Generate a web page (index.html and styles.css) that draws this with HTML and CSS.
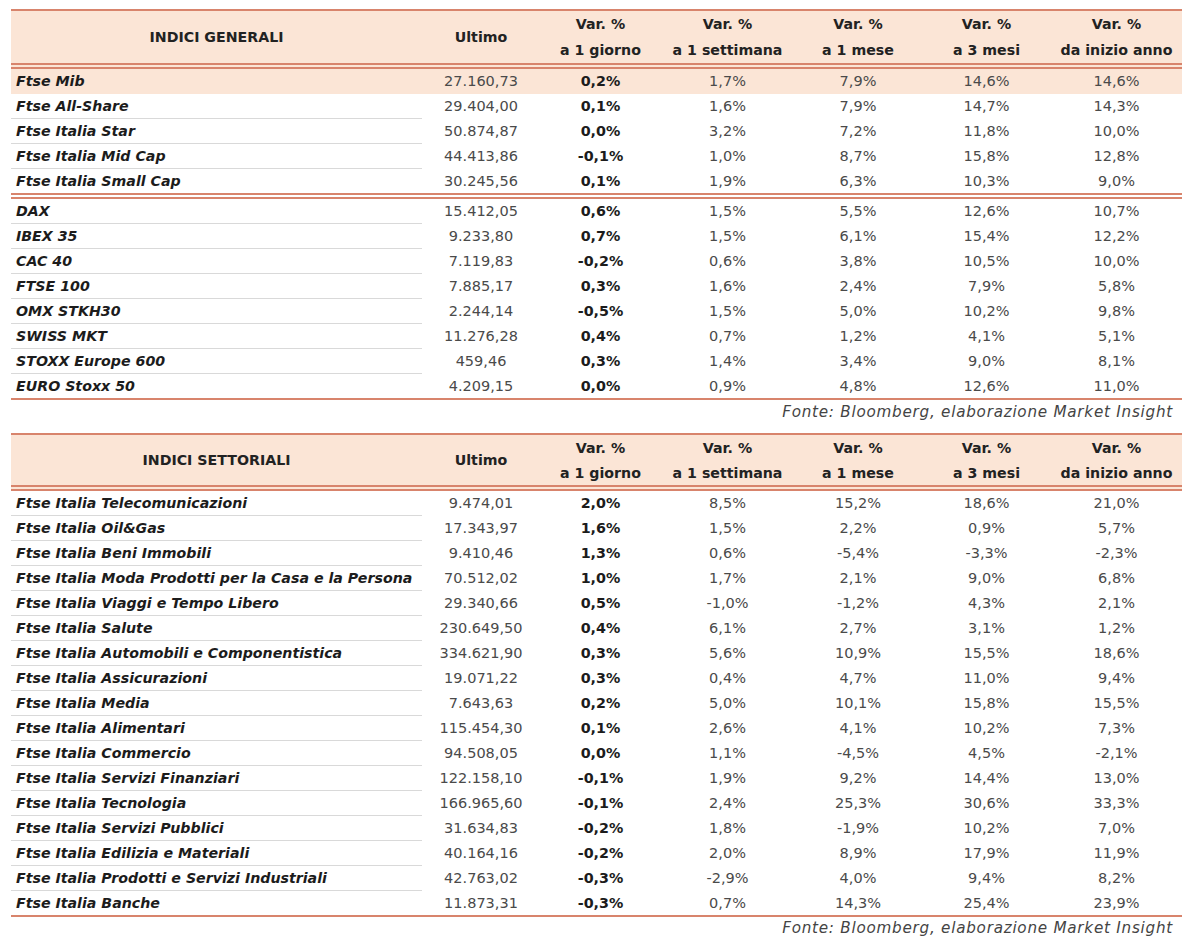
FILE: index.html
```html
<!DOCTYPE html>
<html lang="it">
<head>
<meta charset="utf-8">
<title>Indici</title>
<link rel="stylesheet" href="styles.css">
</head>
<body>
<div class="page">
  <table class="tbl">
    <colgroup>
      <col class="c-name"><col class="c-last"><col class="c-d1"><col class="c-w1"><col class="c-m1"><col class="c-m3"><col class="c-ytd">
    </colgroup>
    <thead>
      <tr>
        <th class="name-h">INDICI GENERALI</th>
        <th>Ultimo</th>
        <th>Var. %<br>a 1 giorno</th>
        <th>Var. %<br>a 1 settimana</th>
        <th>Var. %<br>a 1 mese</th>
        <th>Var. %<br>a 3 mesi</th>
        <th>Var. %<br>da inizio anno</th>
      </tr>
    </thead>
    <tbody>
      <tr class="hl"><td>Ftse Mib</td><td>27.160,73</td><td>0,2%</td><td>1,7%</td><td>7,9%</td><td>14,6%</td><td>14,6%</td></tr>
      <tr><td>Ftse All-Share</td><td>29.404,00</td><td>0,1%</td><td>1,6%</td><td>7,9%</td><td>14,7%</td><td>14,3%</td></tr>
      <tr><td>Ftse Italia Star</td><td>50.874,87</td><td>0,0%</td><td>3,2%</td><td>7,2%</td><td>11,8%</td><td>10,0%</td></tr>
      <tr><td>Ftse Italia Mid Cap</td><td>44.413,86</td><td>-0,1%</td><td>1,0%</td><td>8,7%</td><td>15,8%</td><td>12,8%</td></tr>
      <tr class="grp-end"><td>Ftse Italia Small Cap</td><td>30.245,56</td><td>0,1%</td><td>1,9%</td><td>6,3%</td><td>10,3%</td><td>9,0%</td></tr>
      <tr><td>DAX</td><td>15.412,05</td><td>0,6%</td><td>1,5%</td><td>5,5%</td><td>12,6%</td><td>10,7%</td></tr>
      <tr><td>IBEX 35</td><td>9.233,80</td><td>0,7%</td><td>1,5%</td><td>6,1%</td><td>15,4%</td><td>12,2%</td></tr>
      <tr><td>CAC 40</td><td>7.119,83</td><td>-0,2%</td><td>0,6%</td><td>3,8%</td><td>10,5%</td><td>10,0%</td></tr>
      <tr><td>FTSE 100</td><td>7.885,17</td><td>0,3%</td><td>1,6%</td><td>2,4%</td><td>7,9%</td><td>5,8%</td></tr>
      <tr><td>OMX STKH30</td><td>2.244,14</td><td>-0,5%</td><td>1,5%</td><td>5,0%</td><td>10,2%</td><td>9,8%</td></tr>
      <tr><td>SWISS MKT</td><td>11.276,28</td><td>0,4%</td><td>0,7%</td><td>1,2%</td><td>4,1%</td><td>5,1%</td></tr>
      <tr><td>STOXX Europe 600</td><td>459,46</td><td>0,3%</td><td>1,4%</td><td>3,4%</td><td>9,0%</td><td>8,1%</td></tr>
      <tr class="last"><td>EURO Stoxx 50</td><td>4.209,15</td><td>0,0%</td><td>0,9%</td><td>4,8%</td><td>12,6%</td><td>11,0%</td></tr>
    </tbody>
  </table>
  <p class="source">Fonte: Bloomberg, elaborazione Market Insight</p>

  <table class="tbl tbl-2">
    <colgroup>
      <col class="c-name"><col class="c-last"><col class="c-d1"><col class="c-w1"><col class="c-m1"><col class="c-m3"><col class="c-ytd">
    </colgroup>
    <thead>
      <tr>
        <th class="name-h">INDICI SETTORIALI</th>
        <th>Ultimo</th>
        <th>Var. %<br>a 1 giorno</th>
        <th>Var. %<br>a 1 settimana</th>
        <th>Var. %<br>a 1 mese</th>
        <th>Var. %<br>a 3 mesi</th>
        <th>Var. %<br>da inizio anno</th>
      </tr>
    </thead>
    <tbody>
      <tr><td>Ftse Italia Telecomunicazioni</td><td>9.474,01</td><td>2,0%</td><td>8,5%</td><td>15,2%</td><td>18,6%</td><td>21,0%</td></tr>
      <tr><td>Ftse Italia Oil&amp;Gas</td><td>17.343,97</td><td>1,6%</td><td>1,5%</td><td>2,2%</td><td>0,9%</td><td>5,7%</td></tr>
      <tr><td>Ftse Italia Beni Immobili</td><td>9.410,46</td><td>1,3%</td><td>0,6%</td><td>-5,4%</td><td>-3,3%</td><td>-2,3%</td></tr>
      <tr><td>Ftse Italia Moda Prodotti per la Casa e la Persona</td><td>70.512,02</td><td>1,0%</td><td>1,7%</td><td>2,1%</td><td>9,0%</td><td>6,8%</td></tr>
      <tr><td>Ftse Italia Viaggi e Tempo Libero</td><td>29.340,66</td><td>0,5%</td><td>-1,0%</td><td>-1,2%</td><td>4,3%</td><td>2,1%</td></tr>
      <tr><td>Ftse Italia Salute</td><td>230.649,50</td><td>0,4%</td><td>6,1%</td><td>2,7%</td><td>3,1%</td><td>1,2%</td></tr>
      <tr><td>Ftse Italia Automobili e Componentistica</td><td>334.621,90</td><td>0,3%</td><td>5,6%</td><td>10,9%</td><td>15,5%</td><td>18,6%</td></tr>
      <tr><td>Ftse Italia Assicurazioni</td><td>19.071,22</td><td>0,3%</td><td>0,4%</td><td>4,7%</td><td>11,0%</td><td>9,4%</td></tr>
      <tr><td>Ftse Italia Media</td><td>7.643,63</td><td>0,2%</td><td>5,0%</td><td>10,1%</td><td>15,8%</td><td>15,5%</td></tr>
      <tr><td>Ftse Italia Alimentari</td><td>115.454,30</td><td>0,1%</td><td>2,6%</td><td>4,1%</td><td>10,2%</td><td>7,3%</td></tr>
      <tr><td>Ftse Italia Commercio</td><td>94.508,05</td><td>0,0%</td><td>1,1%</td><td>-4,5%</td><td>4,5%</td><td>-2,1%</td></tr>
      <tr><td>Ftse Italia Servizi Finanziari</td><td>122.158,10</td><td>-0,1%</td><td>1,9%</td><td>9,2%</td><td>14,4%</td><td>13,0%</td></tr>
      <tr><td>Ftse Italia Tecnologia</td><td>166.965,60</td><td>-0,1%</td><td>2,4%</td><td>25,3%</td><td>30,6%</td><td>33,3%</td></tr>
      <tr><td>Ftse Italia Servizi Pubblici</td><td>31.634,83</td><td>-0,2%</td><td>1,8%</td><td>-1,9%</td><td>10,2%</td><td>7,0%</td></tr>
      <tr><td>Ftse Italia Edilizia e Materiali</td><td>40.164,16</td><td>-0,2%</td><td>2,0%</td><td>8,9%</td><td>17,9%</td><td>11,9%</td></tr>
      <tr><td>Ftse Italia Prodotti e Servizi Industriali</td><td>42.763,02</td><td>-0,3%</td><td>-2,9%</td><td>4,0%</td><td>9,4%</td><td>8,2%</td></tr>
      <tr class="last"><td>Ftse Italia Banche</td><td>11.873,31</td><td>-0,3%</td><td>0,7%</td><td>14,3%</td><td>25,4%</td><td>23,9%</td></tr>
    </tbody>
  </table>
  <p class="source source-end">Fonte: Bloomberg, elaborazione Market Insight</p>
</div>
</body>
</html>
```
FILE: styles.css
```css
html, body {
  margin: 0;
  padding: 0;
  background: #ffffff;
}

.page {
  padding: 9px 10px 0 11px;
  font-family: "DejaVu Sans", "Liberation Sans", sans-serif;
  color: #2b2b2b;
}

.tbl {
  width: 1171px;
  border-collapse: separate;
  border-spacing: 0;
  table-layout: fixed;
  font-size: 14.5px;
}

.c-name { width: 411px; }
.c-last { width: 118px; }
.c-d1 { width: 121px; }
.c-w1 { width: 133px; }
.c-m1 { width: 128px; }
.c-m3 { width: 129px; }
.c-ytd { width: 131px; }

.tbl thead th {
  background: #fbe5d6;
  border-top: 2px solid #d8846c;
  border-bottom: 6px double #d8846c;
  padding: 1px 0 0 0;
  line-height: 25.5px;
  font-size: 14.2px;
  font-weight: 700;
  color: #222222;
  text-align: center;
  vertical-align: middle;
  white-space: nowrap;
}

.tbl-2 thead th {
  line-height: 24.5px;
}

.tbl tbody td {
  padding: 0;
  line-height: 24px;
  border-bottom: 1px solid transparent;
  text-align: center;
  white-space: nowrap;
  color: #4a4a4a;
  font-weight: 400;
}

.tbl tbody td:first-child {
  text-align: left;
  padding-left: 5px;
  font-size: 14.2px;
  font-weight: 700;
  font-style: italic;
  color: #1c1c1c;
  border-bottom-color: #d9d9d9;
}

.tbl tbody td:nth-child(3) {
  font-size: 14.3px;
  font-weight: 700;
  color: #1c1c1c;
}

.tbl tbody tr.hl td {
  background: #fbe5d6;
  border-bottom-color: #fbe5d6;
}

.tbl tbody tr.grp-end td {
  border-bottom: 6px double #d8846c;
}

.tbl tbody tr.last td {
  border-bottom: 2px solid #d8846c;
}

.source {
  margin: 0;
  width: 1162px;
  text-align: right;
  font-style: italic;
  font-size: 15.2px;
  letter-spacing: 0.75px;
  line-height: 24px;
  color: #444444;
}

.source-end {
  line-height: 22px;
}

.tbl-2 {
  margin-top: 9px;
}
```
